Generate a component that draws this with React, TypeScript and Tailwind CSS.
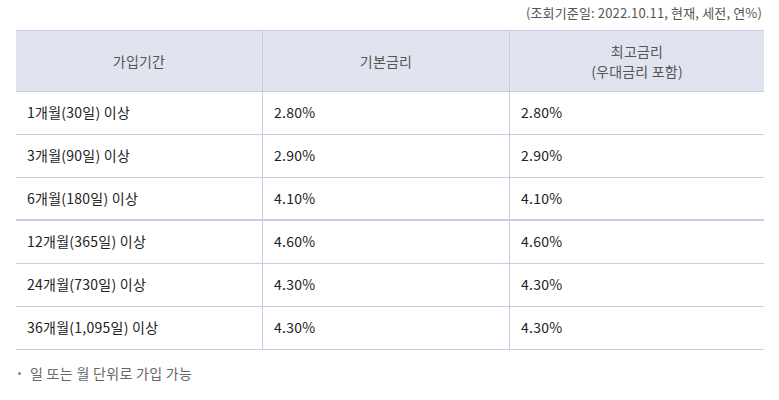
import React from "react";

const rows = [
  ["1개월(30일) 이상", "2.80%", "2.80%"],
  ["3개월(90일) 이상", "2.90%", "2.90%"],
  ["6개월(180일) 이상", "4.10%", "4.10%"],
  ["12개월(365일) 이상", "4.60%", "4.60%"],
  ["24개월(730일) 이상", "4.30%", "4.30%"],
  ["36개월(1,095일) 이상", "4.30%", "4.30%"],
];

export default function App() {
  return (
    <div
      className="w-[779px] h-[400px] bg-white px-[16px]"
      style={{ fontFamily: '"Noto Sans CJK KR", "Noto Sans", sans-serif' }}
    >
      <div className="h-[30px] flex justify-end pr-[1px] text-[13px] leading-[26px] tracking-[0.15px] text-[#555]">
        (조회기준일: 2022.10.11, 현재, 세전, 연%)
      </div>
      <div className="w-[748px]">
        <div className="grid grid-cols-[246px_247px_255px] h-[62px] bg-[#dfe4ee] border-t border-b border-[#c5cee2] text-[14px] text-[#555] leading-[20px] tracking-[0.2px]">
          <div className="flex items-center justify-center">가입기간</div>
          <div className="flex items-center justify-center border-l border-[#c5cee2]">기본금리</div>
          <div className="flex flex-col items-center justify-center border-l border-[#c5cee2] text-center">
            <span>최고금리</span>
            <span>(우대금리 포함)</span>
          </div>
        </div>
        {rows.map((r, i) => (
          <div
            key={i}
            className={
              "grid grid-cols-[246px_247px_255px] h-[43px] border-[#c5cee2] text-[14px] text-[#222] tracking-[0.25px] " +
              (i === 2 ? "border-b-2" : "border-b")
            }
          >
            <div className="flex items-center pl-[11px] pb-[1px]">{r[0]}</div>
            <div className="flex items-center pl-[11px] pb-[1px] border-l border-[#c5cee2]">{r[1]}</div>
            <div className="flex items-center pl-[11px] pb-[1px] border-l border-[#c5cee2]">{r[2]}</div>
          </div>
        ))}
      </div>
      <div className="mt-[13px] flex items-center text-[14px] leading-[20px] tracking-[0.3px] text-[#666]">
        <span className="w-[3px] h-[3px] rounded-full bg-[#888] ml-[2px] mr-[9px]" />
        <span>일 또는 월 단위로 가입 가능</span>
      </div>
    </div>
  );
}
